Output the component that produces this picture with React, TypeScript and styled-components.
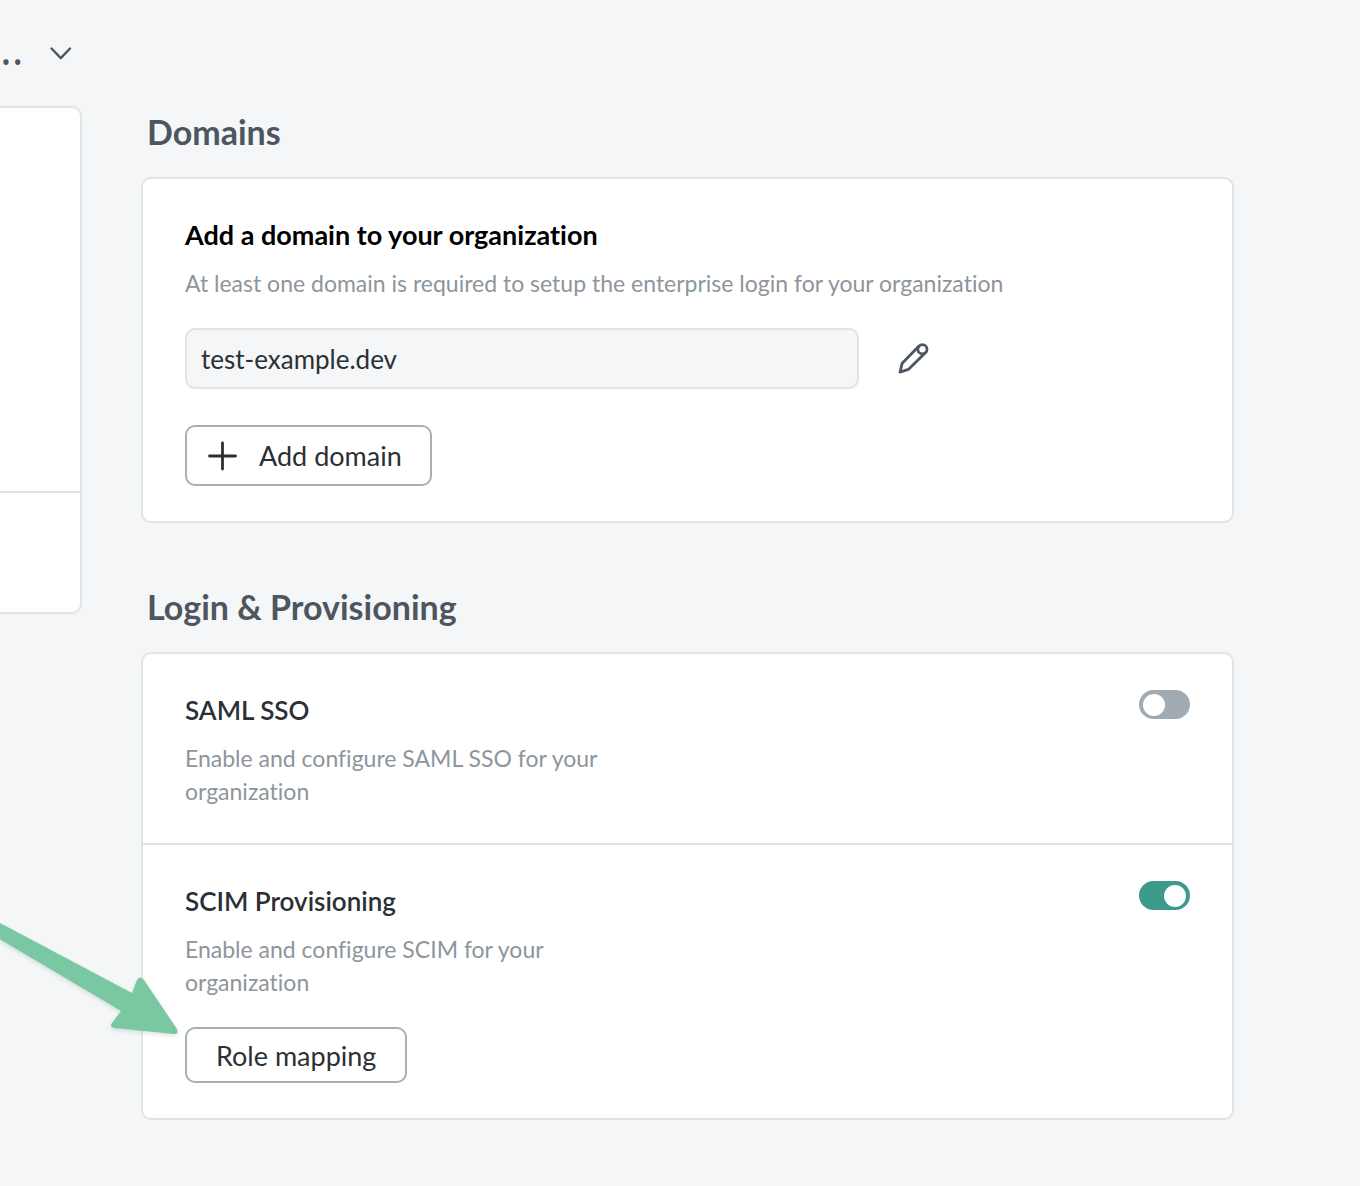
import React, { useState } from "react";
import styled, { createGlobalStyle } from "styled-components";

const color = {
  page: "#f4f6f8",
  line: "#e1e4e7",
  heading: "#4d565e",
  text: "#2b3035",
  muted: "#8d959d",
  control: "#a9b0b5",
  on: "#3d9a8b",
  off: "#a1abb3",
  arrow: "#7ac8a1",
};

const GlobalStyle = createGlobalStyle`
  *, *::before, *::after { box-sizing: border-box; }
  body {
    margin: 0;
    background: ${color.page};
    color: ${color.text};
    font-family: Lato, "Open Sans", sans-serif;
    font-variant-ligatures: none;
  }
  h2, h3, p { margin: 0; }
  button, input { font-family: inherit; color: inherit; }
`;

const Page = styled.div`
  position: relative;
  display: flex;
  align-items: flex-start;
  gap: 59px;
  min-height: 100vh;
  padding-right: 126px;
  overflow: hidden;
`;

const Sidebar = styled.aside`
  flex: 0 0 82px;
`;

const Switcher = styled.button`
  display: flex;
  align-items: center;
  justify-content: space-between;
  width: 100%;
  height: 106px;
  padding: 0 9px 0 0;
  border: 0;
  background: none;
  color: ${color.heading};
  cursor: pointer;
`;

const SwitcherName = styled.span`
  padding-bottom: 10px;
  font-family: "Open Sans", "Noto Sans", sans-serif;
  font-size: 45px;
  line-height: 60px;
`;

const SidePanel = styled.div`
  border: 2px solid ${color.line};
  border-left: 0;
  border-radius: 0 10px 10px 0;
  background: #fff;
`;

const SideBlock = styled.div<{ $tall?: boolean }>`
  height: ${(p) => (p.$tall ? 383 : 121)}px;

  & + & {
    border-top: 2px solid ${color.line};
  }
`;

const Main = styled.main`
  flex: 1;
  min-width: 0;
  display: flex;
  flex-direction: column;
  gap: 65px;
  padding: 113px 0 66px;
`;

const Heading = styled.h2`
  padding-left: 6px;
  margin-bottom: 26px;
  color: ${color.heading};
  font-size: 34px;
  font-weight: 700;
  line-height: 38px;
`;

const Card = styled.div`
  border: 2px solid ${color.line};
  border-radius: 10px;
  background: #fff;
`;

const Row = styled.div`
  display: flex;
  align-items: flex-start;
  justify-content: space-between;
  padding: 36px 42px 35px;

  & + & {
    border-top: 2px solid ${color.line};
  }
`;

const Title = styled.h3<{ $strong?: boolean }>`
  margin-bottom: 12px;
  color: ${(p) => (p.$strong ? "#000" : color.text)};
  font-size: ${(p) => (p.$strong ? 27 : 26)}px;
  font-weight: ${(p) => (p.$strong ? 700 : 600)};
  line-height: 40px;
`;

const Description = styled.p<{ $narrow?: boolean }>`
  max-width: ${(p) => (p.$narrow ? "440px" : "none")};
  color: ${color.muted};
  font-size: 23px;
  line-height: 33px;
`;

const DomainRow = styled.div`
  display: flex;
  align-items: center;
  gap: 30px;
  margin: 28px 0 36px;
`;

const DomainInput = styled.input`
  width: 674px;
  min-width: 0;
  height: 61px;
  padding: 0 14px;
  border: 2px solid ${color.line};
  border-radius: 10px;
  background: ${color.page};
  font-size: 26px;
`;

const IconButton = styled.button`
  display: flex;
  padding: 8px;
  border: 0;
  background: none;
  color: ${color.heading};
  cursor: pointer;
`;

const Button = styled.button<{ $compact?: boolean }>`
  display: flex;
  align-items: center;
  gap: 22px;
  height: ${(p) => (p.$compact ? 56 : 61)}px;
  margin-top: ${(p) => (p.$compact ? 28 : 0)}px;
  padding: ${(p) => (p.$compact ? "0 29px" : "0 28px 0 20px")};
  border: 2px solid ${color.control};
  border-radius: 10px;
  background: #fff;
  font-size: 27px;
  cursor: pointer;
`;

const Switch = styled.input`
  appearance: none;
  flex: none;
  display: flex;
  align-items: center;
  width: 51px;
  height: 29px;
  margin: 0;
  padding: 0 4px;
  border-radius: 15px;
  background: ${color.off};
  cursor: pointer;

  &::before {
    content: "";
    width: 22px;
    height: 22px;
    border-radius: 50%;
    background: #fff;
  }

  &:checked {
    justify-content: flex-end;
    background: ${color.on};
  }
`;

const Pointer = styled.svg`
  position: absolute;
  top: 910px;
  left: 0;
  pointer-events: none;
  filter: drop-shadow(0 2px 2px rgba(40, 70, 60, 0.15));
`;

const ChevronIcon = () => (
  <svg width="24" height="24" viewBox="0 0 24 24" fill="none" aria-hidden="true">
    <path d="M2.5 7.5 11.8 17.2 21 7.5" stroke="currentColor" strokeWidth="2.4" strokeLinecap="round" strokeLinejoin="round" />
  </svg>
);

const PencilIcon = () => (
  <svg width="32" height="32" viewBox="0 0 32 32" fill="none" stroke="currentColor" strokeWidth="2.8" strokeLinejoin="round" aria-hidden="true">
    <circle cx="25.4" cy="6.2" r="4.6" />
    <path d="M22 3 5.2 20.2 3 29.2 11.4 26.4 28.6 9.5" />
  </svg>
);

const PlusIcon = () => (
  <svg width="30" height="30" viewBox="0 0 30 30" fill="none" stroke="currentColor" strokeWidth="2.8" strokeLinecap="round" aria-hidden="true">
    <path d="M15.5 2V28M2.5 15H28.5" />
  </svg>
);

export default function App() {
  const [domain, setDomain] = useState("test-example.dev");
  const [saml, setSaml] = useState(false);
  const [scim, setScim] = useState(true);

  return (
    <>
      <GlobalStyle />
      <Page>
        <Sidebar>
          <Switcher type="button">
            <SwitcherName>..</SwitcherName>
            <ChevronIcon />
          </Switcher>
          <SidePanel>
            <SideBlock $tall />
            <SideBlock />
          </SidePanel>
        </Sidebar>

        <Main>
          <section>
            <Heading>Domains</Heading>
            <Card>
              <Row>
                <div>
                  <Title $strong>
                    <label htmlFor="domain">Add a domain to your organization</label>
                  </Title>
                  <Description>
                    At least one domain is required to setup the enterprise login for your organization
                  </Description>
                  <DomainRow>
                    <DomainInput id="domain" value={domain} onChange={(e) => setDomain(e.target.value)} />
                    <IconButton type="button" aria-label="Edit domain">
                      <PencilIcon />
                    </IconButton>
                  </DomainRow>
                  <Button type="button">
                    <PlusIcon />
                    Add domain
                  </Button>
                </div>
              </Row>
            </Card>
          </section>

          <section>
            <Heading>Login &amp; Provisioning</Heading>
            <Card>
              <Row>
                <div>
                  <Title>
                    <label htmlFor="saml">SAML SSO</label>
                  </Title>
                  <Description $narrow>Enable and configure SAML SSO for your organization</Description>
                </div>
                <Switch id="saml" type="checkbox" role="switch" checked={saml} onChange={(e) => setSaml(e.target.checked)} />
              </Row>
              <Row>
                <div>
                  <Title>
                    <label htmlFor="scim">SCIM Provisioning</label>
                  </Title>
                  <Description $narrow>Enable and configure SCIM for your organization</Description>
                  <Button type="button" $compact>
                    Role mapping
                  </Button>
                </div>
                <Switch id="scim" type="checkbox" role="switch" checked={scim} onChange={(e) => setScim(e.target.checked)} />
              </Row>
            </Card>
          </section>
        </Main>

        <Pointer width="190" height="136" viewBox="0 0 190 136" aria-hidden="true">
          <path
            d="M-4 11 132 83 137 70Q140 65 144 70L177 119Q179 124 174 124L114 118Q109 117 112 113L121 101-4 27Z"
            fill={color.arrow}
          />
        </Pointer>
      </Page>
    </>
  );
}
